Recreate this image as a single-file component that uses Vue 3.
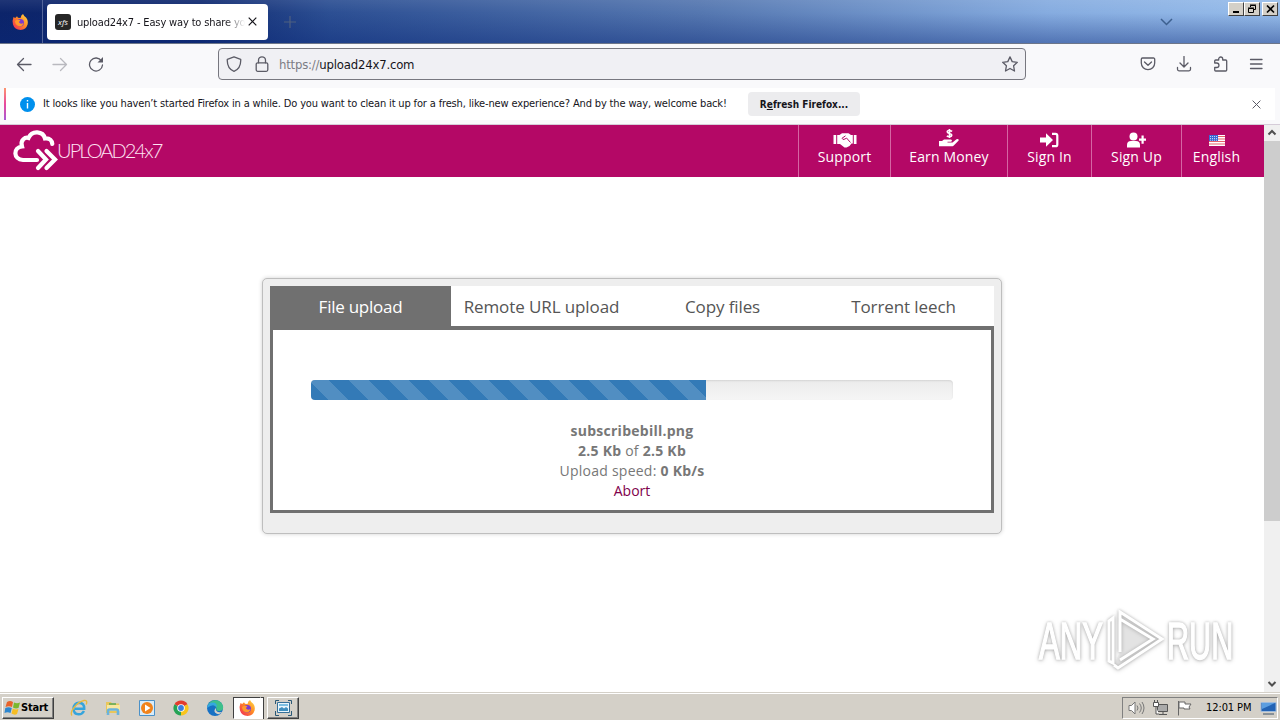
<template>
  <div class="screen">
    <header class="tabbar">
      <div class="pinned">
        <svg width="18" height="18" viewBox="0 0 18 18">
          <use href="#firefox" />
        </svg>
      </div>
      <div class="tab">
        <span class="favicon">xfs</span>
        <span class="tab-title">upload24x7 - Easy way to share yo</span>
        <svg class="tab-close" width="9" height="9" viewBox="0 0 9 9"><path d="M.7.7l7.6 7.6M8.3.7L.7 8.3" stroke="#15141a" stroke-width="1.2" /></svg>
      </div>
      <svg class="plus" width="12" height="12" viewBox="0 0 12 12"><path d="M6 0v12M0 6h12" stroke="#4f6080" stroke-width="1.2" /></svg>
      <svg class="all-tabs" width="13" height="8" viewBox="0 0 13 8"><path d="M1 1l5.5 5.5L12 1" fill="none" stroke="#3d608f" stroke-width="1.5" /></svg>
      <div class="window-buttons">
        <span class="win-btn"><svg width="14" height="12" viewBox="0 0 14 12"><path d="M4 8h6v2H4z" /></svg></span>
        <span class="win-btn"><svg width="14" height="12" viewBox="0 0 14 12"><path d="M5.500 4V2.500h5v4H9M5 2h6M3.500 5.500h5v4h-5zM3 5h6" fill="none" stroke="#000" /></svg></span>
        <span class="win-btn last"><svg width="14" height="12" viewBox="0 0 14 12"><path d="M4 2.500l7 7M11 2.500l-7 7" stroke="#000" stroke-width="1.7" /></svg></span>
      </div>
    </header>

    <div class="toolbar">
      <div class="nav-buttons">
        <svg width="16" height="16" viewBox="0 0 16 16"><path d="M15 8.500H1.500M7.500 2.500l-6 6 6 6" /></svg>
        <svg class="disabled" width="16" height="16" viewBox="0 0 16 16"><path d="M1 8.500h13.500M8.500 2.500l6 6-6 6" /></svg>
        <svg width="16" height="16" viewBox="0 0 16 16"><path d="M13.500 5A6.500 6.500 0 1 0 14.500 9" /><path d="M15 1v5.500H9.500z" class="solid" /></svg>
      </div>
      <div class="urlbar">
        <svg width="16" height="16" viewBox="0 0 16 16"><path d="M8 .8l6.700 2.500c.3 5.500-1.700 10-6.700 12C3 13.300 1 8.800 1.300 3.300z" /></svg>
        <svg class="lock" width="16" height="16" viewBox="0 0 16 16"><rect x="2.200" y="6.800" width="11.600" height="8.500" rx="1.500" /><path d="M4.500 6.800V4.300a3.500 3.500 0 0 1 7 0v2.500" /></svg>
        <span class="url"><span class="scheme">https://</span>upload24x7.com</span>
        <svg class="star" width="16" height="16" viewBox="0 0 16 16"><path d="M8 .9l2.200 4.700 5.100.7-3.700 3.500.9 5.200L8 12.500 3.500 15l.9-5.200L.7 6.300l5.100-.7z" /></svg>
      </div>
      <div class="tools">
        <svg width="16" height="16" viewBox="0 0 16 16"><path d="M2.500 2h11A1.200 1.200 0 0 1 14.700 3.200V7a6.700 6.700 0 0 1-13.400 0V3.200A1.200 1.200 0 0 1 2.500 2zM4.500 6L8 9.300 11.500 6" /></svg>
        <svg width="16" height="16" viewBox="0 0 16 16"><path d="M8 .5v10M4 7l4 4 4-4M1.500 11.500v1.800q0 1.500 1.500 1.500h10q1.500 0 1.500-1.500v-1.800" /></svg>
        <svg width="16" height="16" viewBox="0 0 16 16"><path d="M2 6.500V5q0-1 1-1h3V3a2 2 0 0 1 4 0v1h3q1 0 1 1v9q0 1-1 1H3q-1 0-1-1v-2.500h2a2 2 0 0 0 0-4.500H2z" transform="translate(.7 0)" /></svg>
        <svg width="16" height="16" viewBox="0 0 16 16"><path d="M2.500 3.500H14M2.500 8H14M2.500 12.500H14" /></svg>
      </div>
    </div>

    <div class="notice-wrap">
      <div class="notice">
        <svg width="15" height="15" viewBox="0 0 15 15"><circle cx="7.500" cy="7.500" r="7.500" fill="#0090ed" /><path d="M7.500 3v1.600M7.500 6v5.500" stroke="#fff" stroke-width="1.400" /></svg>
        <span class="notice-text">It looks like you haven’t started Firefox in a while. Do you want to clean it up for a fresh, like-new experience? And by the way, welcome back!</span>
        <button class="refresh">R<u>e</u>fresh Firefox...</button>
        <svg class="notice-close" width="9" height="9" viewBox="0 0 9 9"><path d="M.6.600l7.800 7.800M8.400.600L.6 8.400" stroke="#5b5b66" /></svg>
      </div>
    </div>

    <div class="viewport">
      <main class="page">
        <div class="site-header">
          <svg class="cloud" width="46" height="42" viewBox="0 0 46 42">
            <path d="M25 31H11C1 30.500 1 18.500 10 17.500 8 10.500 13.500 8 16.500 9 20 1 31 2 33 9.500c5-.5 7 2 7.300 5.500" />
            <path d="M26 22l8 8.500-8 8.500M34.500 22l8.500 8.500-8.500 8.500" />
          </svg>
          <span class="brand">UPLOAD24x7</span>
          <nav>
            <a v-for="item in menu" :key="item.label" :class="item.icon">
              <svg v-if="item.icon === 'support'" width="24" height="16" viewBox="0 0 24 16"><path d="M.5 3h2.700v9H.5zM20.800 3h2.700v9h-2.700zM4.200 3h2.300L9 1.200h6.500L18 3h1.800v8.500h-1.300L16.500 14l-3 1.500h-2L7 12H4.200z" /><path d="M12.500 3.800L9 6.300q.5 2 3 .7l1.500-1 4 4.500" fill="none" stroke="#b40866" stroke-width="1" /></svg>
              <svg v-else-if="item.icon === 'money'" width="20" height="18" viewBox="0 0 20 18"><path d="M0 12h3l2-1.500h7q1.800.7.2 2.300H8.500v.7h5l4-3.300q2.500-.4 2.200 1.200l-5.200 5.300q-.7.500-2 .5H0z" /><path d="M13.200 2.200Q8.200.4 8.200 2.800c0 2 4.600 1.200 4.600 3.300 0 2-3.200 1.900-5 .9M10.500 0v9" fill="none" stroke="#fff" stroke-width="1.600" /></svg>
              <svg v-else-if="item.icon === 'signin'" width="19" height="16" viewBox="0 0 19 16"><path d="M0 5.500h6V1.200L13 8l-7 6.800v-4.300H0z" /><path d="M12 1.800h3.500q1.800 0 1.800 1.800v8.800q0 1.800-1.800 1.800H12" fill="none" stroke="#fff" stroke-width="2.200" /></svg>
              <svg v-else-if="item.icon === 'signup'" width="19" height="16" viewBox="0 0 19 16"><circle cx="6.500" cy="4.500" r="4" /><path d="M0 15.500v-2.500q0-4 4-4h5q4 0 4 4v2.500zM14.500 3.500v3H12v2.200h2.500v3h2.200v-3H19V6.500h-2.300v-3z" /></svg>
              <svg v-else width="16" height="11" viewBox="0 0 16 11"><path fill="#fff" d="M0 0h16v11H0z" /><path d="M0 1.500h16M0 4h16M0 6.500h16M0 9h16" stroke="#e8606a" stroke-width="1.100" /><path fill="#3b67d4" d="M0 0h9v6H0z" /><path d="M1 1.500h7M1 3.500h7M1 5.200h7" stroke="#fff" stroke-width=".7" stroke-dasharray="1 1" /></svg>
              <span>{{ item.label }}</span>
            </a>
          </nav>
        </div>

        <section class="uploader">
          <div class="tabs">
            <a v-for="(t, i) in uploadTabs" :key="t" :class="{ active: i === 0 }">{{ t }}</a>
          </div>
          <div class="tab-content">
            <div class="progress">
              <div class="progress-bar" :style="{ width: progress + '%' }"></div>
            </div>
            <div class="status">
              <b>subscribebill.png</b><br>
              <b>2.5 Kb</b> of <b>2.5 Kb</b><br>
              Upload speed: <b>0 Kb/s</b><br>
              <a>Abort</a>
            </div>
          </div>
        </section>
      </main>
      <div class="scrollbar">
        <svg width="16" height="16" viewBox="0 0 16 16"><path d="M4.500 9.500L8 6l3.500 3.500" /></svg>
        <div class="thumb"></div>
        <svg class="down" width="16" height="16" viewBox="0 0 16 16"><path d="M4.500 6L8 9.500 11.500 6" /></svg>
      </div>
    </div>

    <footer class="taskbar">
      <div class="start">
        <svg width="17" height="16" viewBox="0 0 17 16"><path fill="#e8622a" d="M3 2q3-2 6 0L8 7Q5 5.500 1.500 7z" /><path fill="#7ab82e" d="M10 2.500q3 1.500 6 0L14.500 8q-3 1-5.500-.5z" /><path fill="#2d86cf" d="M1.300 8Q4.500 6.500 7.800 8l-1.300 5q-3-1.500-6 0z" /><path fill="#f6bd24" d="M8.800 8.500q3 1.500 5.700.5L13 14q-2.500 1.500-5.500-.5z" /></svg>
        <b>Start</b>
      </div>
      <div class="quick">
        <svg width="18" height="18" viewBox="0 0 18 18"><path d="M14 12q-2 3.500-5.500 3.300Q3.500 15 3.500 9.500 4 4 9 3.700q5.500.3 5.200 6H5" fill="none" stroke="#35a4dc" stroke-width="2.500" /><path d="M2 16.500C-1 13 7 3 14 1.500q4-.5 2.200 4" fill="none" stroke="#e7b93f" stroke-width="1.300" /></svg>
        <svg width="18" height="18" viewBox="0 0 18 18"><path fill="#e9c65b" d="M2 3h5l1 1.500h7V14H2z" /><path fill="#f8e7a0" d="M3 6h13v6H3z" /><path d="M4 16v-4q0-1.500 1.500-1.500h7q1.500 0 1.500 1.500v4" fill="none" stroke="#6bb3dc" stroke-width="2.600" /><path d="M5 5h7" stroke="#58a857" stroke-width="1.500" /></svg>
        <svg width="18" height="18" viewBox="0 0 18 18"><path fill="#d8ecfa" stroke="#4b91c8" d="M1.500 1.500h15v15h-15z" /><circle cx="9" cy="9" r="6" fill="#f1831b" /><path fill="#fff" d="M7 5.500l5.500 3.500L7 12.500z" /></svg>
        <svg width="18" height="18" viewBox="0 0 18 18"><path fill="#e33b2e" d="M9 9L2.500 5.200a7.500 7.500 0 0 1 13 0z" /><path fill="#f9c51d" d="M9 9l6.500-3.800A7.500 7.500 0 0 1 9 16.500z" /><path fill="#25a355" d="M9 9v7.500A7.500 7.500 0 0 1 2.500 5.200z" /><circle cx="9" cy="9" r="3.800" fill="#fff" /><circle cx="9" cy="9" r="2.900" fill="#3b7de0" /></svg>
        <svg width="18" height="18" viewBox="0 0 18 18"><circle cx="9" cy="9" r="8" fill="#1771c4" /><path fill="#3fc08a" d="M2 6C5-1 15 0 17 7q1 5-4 5-3.500 0-2.500-3Q8 4 2 6z" /><path fill="#35a8e0" d="M1 9q1-6 6.500-5.500Q11 4 11 8 7 4 1 9z" /><path fill="#d4d0c8" d="M10 9q-1 5 6 4-3 4-7 .5-1.500-2.500 1-4.500z" /></svg>
      </div>
      <div class="task pressed">
        <svg width="18" height="18" viewBox="0 0 18 18">
          <defs>
            <linearGradient id="flame" x1="1" y1="0" x2="0" y2="1">
              <stop offset="0" stop-color="#ffe14a" />
              <stop offset=".45" stop-color="#ff8a25" />
              <stop offset="1" stop-color="#f0205c" />
            </linearGradient>
          </defs>
          <g id="firefox">
            <path fill="url(#flame)" d="M2.500 4l1.700 1L6 3.300l1 1.500L9.500 5Q10 2 12 1q1 2 3 3.500 2.500 3 1.600 7-1.500 5-7 5.500-6-.2-7.600-5.500Q1 7.500 2.500 4z" />
            <circle cx="9.300" cy="9.800" r="3.700" fill="#7a3bd1" />
            <path fill="#ff9a2b" d="M4 8q3-2 5.500-.5L7.800 9q1.500 2.700 4.700 1-1 3.800-4.500 3.300Q4 12 4 8z" />
          </g>
        </svg>
      </div>
      <div class="task-edge"></div>
      <div class="task raised">
        <svg width="17" height="16" viewBox="0 0 17 16"><path fill="#e9f6fd" stroke="#367099" d="M2.500 2.500h12v10h-12z" /><path fill="#3f8fbf" d="M4 11V8.500l3-1.500 2 1.500L11 7l2 1.500V11z" /><path d="M4 5h9" stroke="#7dbfe2" stroke-width="2" /><path d="M.5 4V.500H4M13 .500h3.500V4M.5 11v4.500H4M13 15.500h3.500V11" fill="none" stroke="#2b5876" /></svg>
      </div>
      <div class="tray">
        <svg width="17" height="16" viewBox="0 0 17 16"><path fill="#fff" stroke="#777" d="M1 5.500h2.500L7 2v12l-3.500-3.500H1z" /><path d="M9 5.500q2 2.500 0 5M11.500 3.500q3.500 4.500 0 9M14 2q4 6 0 12" fill="none" stroke="#777" /></svg>
        <svg width="17" height="16" viewBox="0 0 17 16"><path fill="#aaa" stroke="#555" d="M5.500 4.500h10v7h-10zM7 14.500h8M11 12v2" /><path fill="#fff" stroke="#555" d="M1.500 2.500h5v4h-5zM2.500 0v2M5.500 0v2M4 7v7h3" /></svg>
        <svg width="17" height="16" viewBox="0 0 17 16"><path fill="#fff" stroke="#666" d="M2.500 1v14.500M3 2h6v2h6l-2 3 1 2H8V8H3z" /></svg>
        <span class="clock">12:01 PM</span>
        <svg width="17" height="14" viewBox="0 0 17 14"><path fill="#2363b4" stroke="#9fbbdc" d="M1 1.500h15v9H1z" /><path fill="#5c9ee0" d="M2 2h13L2 8z" /><path d="M3 13h11" stroke="#3a5169" /></svg>
      </div>
    </footer>

    <svg class="watermark" width="206" height="72" viewBox="0 0 206 72">
      <g class="mark">
        <text transform="translate(6 55) scale(.61 1)">ANY</text>
        <text transform="translate(134 55) scale(.6 1)">RUN</text>
        <path d="M80 59V14l-4 3v40zM87 48V8l42 27-44 29-4-3M87 15l33 20-33 21" />
      </g>
    </svg>
  </div>
</template>

<script setup>
import { ref } from 'vue';

const menu = [
  { label: 'Support', icon: 'support' },
  { label: 'Earn Money', icon: 'money' },
  { label: 'Sign In', icon: 'signin' },
  { label: 'Sign Up', icon: 'signup' },
  { label: 'English', icon: 'lang' },
];

const uploadTabs = ['File upload', 'Remote URL upload', 'Copy files', 'Torrent leech'];

const progress = ref(61.5);
</script>

<style>
body {
  overflow: hidden;
}
</style>

<style scoped>
* {
  box-sizing: border-box;
}

svg {
  display: block;
  flex: none;
}

.screen {
  position: relative;
  display: flex;
  flex-direction: column;
  width: 1280px;
  height: 720px;
  overflow: hidden;
  background: #fff;
  font-family: "DejaVu Sans Condensed", "DejaVu Sans", sans-serif;
  font-stretch: condensed;
  font-size: 11px;
  color: #15141a;
}

.tabbar {
  display: flex;
  align-items: center;
  height: 44px;
  flex: none;
  border-bottom: 1px solid #6d7689;
  background: linear-gradient(to bottom, rgba(255, 255, 255, 0.08), rgba(10, 40, 120, 0) 30%, rgba(10, 40, 120, 0.42)), linear-gradient(to right, #0c246a 0, #102a70 200px, #2c4f93 330px, #5577b0 700px, #86ace0 1050px, #96bcea 1280px);
}

.pinned {
  width: 43px;
  height: 43px;
  padding: 13px 0 0 11px;
  border-right: 1px solid #53659a;
}

.tab {
  display: flex;
  align-items: center;
  width: 221px;
  height: 36px;
  margin-left: 4px;
  padding: 0 11px 0 8px;
  border-radius: 4px;
  background: #fff;
}

.favicon {
  width: 16px;
  height: 16px;
  border-radius: 3px;
  background: #262626;
  color: #fff;
  font: italic 8px/15px "Open Sans", sans-serif;
  text-align: center;
}

.tab-title {
  width: 168px;
  margin-left: 6px;
  padding-top: 2px;
  overflow: hidden;
  white-space: nowrap;
  letter-spacing: -0.15px;
  mask-image: linear-gradient(to right, #000 148px, transparent 168px);
}

.tab-close {
  margin-left: 3px;
}

.plus {
  margin-left: 16px;
}

.all-tabs {
  margin-left: auto;
  margin-right: 55px;
}

.window-buttons {
  display: flex;
  align-self: flex-start;
  margin: 2px 2px 0 0;
}

.win-btn {
  width: 16px;
  height: 14px;
  border: 1px solid;
  border-color: #fff #404040 #404040 #fff;
  background: #d4d0c8;
}

.win-btn.last {
  margin-left: 2px;
}

.toolbar {
  display: flex;
  align-items: center;
  height: 44px;
  flex: none;
  padding-bottom: 4px;
  background: #f9f9fb;
}

.toolbar svg {
  fill: none;
  stroke: #5b5b66;
  stroke-width: 1.3;
  stroke-linecap: round;
  stroke-linejoin: round;
}

.toolbar .disabled {
  opacity: 0.4;
}

.toolbar .solid {
  fill: #5b5b66;
  stroke: none;
}

.nav-buttons {
  display: flex;
  gap: 20px;
  width: 218px;
  padding-left: 16px;
}

.urlbar {
  display: flex;
  align-items: center;
  width: 808px;
  height: 32px;
  padding: 0 7px;
  border: 1px solid #77777f;
  border-radius: 4px;
  background: #f0f0f4;
}

.lock {
  margin-left: 12px;
}

.url {
  margin-left: 9px;
  font-size: 13px;
  letter-spacing: -0.2px;
}

.scheme {
  color: #7c7c84;
}

.star {
  margin-left: auto;
}

.tools {
  display: flex;
  gap: 20px;
  margin-left: auto;
  padding-right: 16px;
}

.notice-wrap {
  height: 37px;
  flex: none;
  padding: 0 5px 5px 4px;
  border-bottom: 1px solid #d5ccd8;
  background: #f9f9fb;
}

.notice {
  display: flex;
  align-items: center;
  height: 32px;
  padding: 0 14px 0 14px;
  border-left: 2px solid;
  border-image: linear-gradient(#ff9a6c, #e8489c 50%, #a35bd8) 1;
  background: #fff;
}

.notice-text {
  width: 705px;
  margin-left: 8px;
  padding-bottom: 2px;
  white-space: nowrap;
  letter-spacing: -0.15px;
}

.refresh {
  width: 112px;
  height: 24px;
  padding: 0;
  border: 0;
  border-radius: 4px;
  background: #ececee;
  color: #15141a;
  font: bold 10px "DejaVu Sans Condensed", "DejaVu Sans", sans-serif;
}

.notice-close {
  margin-left: auto;
}

.viewport {
  display: flex;
  height: 567px;
  flex: none;
}

.page {
  width: 1264px;
  background: #fff;
  font-family: "Open Sans", sans-serif;
  font-stretch: normal;
}

.site-header {
  display: flex;
  height: 52px;
  padding-left: 12px;
  background: #b40866;
}

.cloud {
  margin-top: 4px;
  fill: none;
  stroke: #fff;
  stroke-width: 4.2;
  stroke-linecap: round;
}

.brand {
  margin: 11px 0 0 -1px;
  color: #ffe4f4;
  font: 300 20px/28px Lato, sans-serif;
  letter-spacing: -1.9px;
}

nav {
  display: flex;
  margin-left: auto;
}

nav a {
  display: flex;
  flex-direction: column;
  align-items: center;
  width: 92px;
  padding-top: 7px;
  border-left: 1px solid #d566a3;
  color: #fff;
  font-size: 14px;
  line-height: 18px;
}

nav a span {
  letter-spacing: 0.15px;
}

nav a svg {
  fill: #fff;
}

nav a.money {
  width: 117px;
  padding-top: 4px;
}

nav a.money svg {
  margin-bottom: 1px;
}

nav a.signin {
  width: 84px;
}

nav a.signup {
  width: 90px;
}

nav a.lang {
  width: 83px;
  padding: 10px 13px 0 0;
}

nav a.lang svg {
  margin-bottom: 2px;
}

.uploader {
  width: 740px;
  height: 256px;
  margin: 101px 0 0 262px;
  padding: 7px;
  border: 1px solid #bebebe;
  border-radius: 5px;
  background: #eee;
  box-shadow: 0 0 4px rgba(0, 0, 0, 0.18);
}

.tabs {
  display: grid;
  grid-template-columns: repeat(4, 181px);
  height: 40px;
  background: #fff;
}

.tabs a {
  color: #555;
  font-size: 17px;
  line-height: 42px;
  letter-spacing: -0.1px;
  text-align: center;
  white-space: nowrap;
}

.tabs a.active {
  background: #707070;
  color: #fff;
  letter-spacing: -0.25px;
}

.tab-content {
  height: 187px;
  padding: 50px 38px 0;
  border: 3px solid #707070;
  border-top-width: 4px;
  background: #fff;
}

.progress {
  height: 20px;
  margin-bottom: 21px;
  overflow: hidden;
  border-radius: 4px;
  background: linear-gradient(#ebebeb, #f5f5f5);
  box-shadow: inset 0 1px 2px rgba(0, 0, 0, 0.1);
}

.progress-bar {
  height: 100%;
  background-color: #337ab7;
  background-image: linear-gradient(45deg, rgba(255, 255, 255, 0.15) 25%, transparent 25%, transparent 50%, rgba(255, 255, 255, 0.15) 50%, rgba(255, 255, 255, 0.15) 75%, transparent 75%, transparent);
  background-position: -2px 0;
  background-size: 40px 40px;
}

.status {
  color: #777;
  font-size: 14px;
  line-height: 20px;
  letter-spacing: 0.25px;
  text-align: center;
}

.status a {
  color: #80004b;
  letter-spacing: 0;
}

.scrollbar {
  display: flex;
  flex-direction: column;
  width: 16px;
  background: #f0f0f0;
}

.scrollbar svg {
  fill: none;
  stroke: #505050;
  stroke-width: 2;
}

.thumb {
  height: 380px;
  background: #cdcdcd;
}

.scrollbar .down {
  margin-top: auto;
}

.taskbar {
  display: flex;
  align-items: center;
  height: 28px;
  flex: none;
  padding: 2px 2px 0;
  border-top: 1px solid #d4d0c8;
  background: #d4d0c8;
  box-shadow: inset 0 1px #fff;
  color: #000;
}

.start {
  display: flex;
  align-items: center;
  width: 52px;
  height: 22px;
  padding-left: 1px;
  border: 1px solid;
  border-color: #fff #404040 #404040 #fff;
  box-shadow: inset -1px -1px #808080;
}

.start b {
  font-size: 11px;
  letter-spacing: -0.2px;
}

.quick {
  display: flex;
  gap: 16px;
  width: 179px;
  padding-left: 16px;
}

.task {
  display: flex;
  align-items: center;
  justify-content: center;
  height: 22px;
  border: 1px solid;
}

.pressed {
  width: 28px;
  border-color: #404040 #fff #fff #404040;
  background: #fff;
}

.task-edge {
  width: 3px;
  height: 22px;
  margin-right: 3px;
  border-top: 1px solid #404040;
  border-right: 1px solid #404040;
  background: #fff;
}

.raised {
  width: 32px;
  border-color: #fff #404040 #404040 #fff;
  box-shadow: inset -1px -1px #808080;
}

.tray {
  display: flex;
  align-items: center;
  gap: 7px;
  width: 156px;
  height: 22px;
  margin-left: auto;
  padding-left: 5px;
  border: 1px solid;
  border-color: #808080 #fff #fff #808080;
}

.clock {
  width: 47px;
  margin-left: 6px;
  white-space: nowrap;
  letter-spacing: -0.1px;
}

/* sits over the page content */
.watermark {
  position: absolute;
  left: 1033px;
  top: 604px;
}

.mark {
  fill: #fff;
  stroke: #fff;
  stroke-width: 1.5;
  font: 51px "Liberation Sans", sans-serif;
  filter: drop-shadow(0 0 1.5px rgba(0, 0, 0, 0.22)) drop-shadow(0 1px 2px rgba(0, 0, 0, 0.2));
}

.mark path {
  fill: rgba(200, 200, 200, 0.2);
  stroke-width: 3;
}
</style>
